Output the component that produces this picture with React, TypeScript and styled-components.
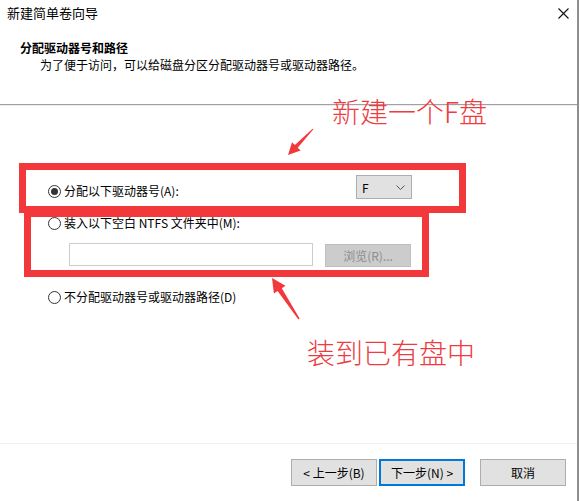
import React from "react";
import styled, { createGlobalStyle } from "styled-components";

const Global = createGlobalStyle`
  html, body { margin: 0; padding: 0; background: #fff; }
  body {
    font-family: "Noto Sans CJK SC", "Microsoft YaHei", sans-serif;
    font-size: 12px;
    color: #000;
  }
  * { box-sizing: border-box; }
`;

const Window = styled.div`
  position: relative;
  width: 579px;
  height: 501px;
  display: flex;
  flex-direction: column;
  background: #fff;
  border-right: 2px solid #8e8e8e;
  overflow: hidden;
`;

const TitleBar = styled.div`
  height: 26px;
  display: flex;
  align-items: center;
  justify-content: space-between;
  padding: 0 8px 0 7px;
`;

const TitleText = styled.span`
  font-size: 13px;
  line-height: 26px;
  color: #000;
`;

const CloseBtn = styled.span`
  display: flex;
  width: 11px;
  height: 11px;
`;

const Header = styled.div`
  height: 79px;
  padding: 13px 0 0 20px;
  border-bottom: 1px solid #a0a0a0;
  box-shadow: 0 1px 0 #ededed;
`;

const HeaderTitle = styled.div`
  font-weight: bold;
  font-size: 12px;
  line-height: 17px;
`;

const HeaderSub = styled.div`
  font-size: 12px;
  line-height: 17px;
  padding-left: 20px;
  color: #000;
`;

const Content = styled.div`
  flex: 1;
  padding: 70px 0 0 48px;
  display: flex;
  flex-direction: column;
`;

const DriveRow = styled.div`
  width: 364px;
  height: 26px;
  display: flex;
  justify-content: space-between;
  align-items: flex-start;
`;

const RadioRow = styled.label<{ $mt?: number }>`
  display: flex;
  align-items: center;
  height: 20px;
  gap: 3px;
  margin-top: ${(p) => p.$mt ?? 0}px;
  font-size: 12px;
  line-height: 20px;
`;

const RadioCircle = styled.span<{ $checked?: boolean }>`
  width: 13px;
  height: 13px;
  border-radius: 50%;
  border: 1px solid #333;
  background: #fff;
  display: flex;
  align-items: center;
  justify-content: center;
  flex: none;
  &::after {
    content: "";
    width: 7px;
    height: 7px;
    border-radius: 50%;
    background: ${(p) => (p.$checked ? "#333" : "transparent")};
  }
`;

const Select = styled.div`
  width: 56px;
  height: 24px;
  background: #e1e1e1;
  border: 1px solid #adadad;
  display: flex;
  align-items: center;
  justify-content: space-between;
  padding: 0 6px 0 5px;
  font-size: 12px;
`;

const PathRow = styled.div`
  display: flex;
  align-items: flex-start;
  gap: 12px;
  margin: 10px 0 0 21px;
`;

const PathInput = styled.div`
  width: 244px;
  height: 23px;
  background: #fff;
  border: 1px solid #cccccc;
`;

const BrowseBtn = styled.div`
  width: 86px;
  height: 23px;
  margin-top: 1px;
  background: #cccccc;
  border: 1px solid #bfbfbf;
  color: #8d8d8d;
  display: flex;
  align-items: center;
  justify-content: center;
  font-size: 12px;
`;

const Footer = styled.div`
  height: 58px;
  border-top: 1px solid #efefef;
  display: flex;
  justify-content: flex-end;
  align-items: flex-start;
  padding: 15px 11px 0 0;
`;

const Button = styled.div<{ $primary?: boolean; $ml?: number }>`
  width: 86px;
  height: 27px;
  margin-left: ${(p) => p.$ml ?? 0}px;
  background: #e1e1e1;
  border: 1px solid ${(p) => (p.$primary ? "#0078d7" : "#adadad")};
  box-shadow: ${(p) => (p.$primary ? "inset 0 0 0 1px #0078d7" : "none")};
  display: flex;
  align-items: center;
  justify-content: center;
  font-size: 12px;
  color: #000;
  white-space: pre;
`;

/* ---------- annotation overlay ---------- */

const RedBox = styled.div<{ $x: number; $y: number; $w: number; $h: number }>`
  position: absolute;
  left: ${(p) => p.$x}px;
  top: ${(p) => p.$y}px;
  width: ${(p) => p.$w}px;
  height: ${(p) => p.$h}px;
  border: 7px solid #f2383a;
  pointer-events: none;
`;

const RedNote = styled.div<{ $x: number; $y: number }>`
  position: absolute;
  left: ${(p) => p.$x}px;
  top: ${(p) => p.$y}px;
  font-family: "Noto Sans CJK SC", sans-serif;
  font-weight: 300;
  font-size: 28px;
  line-height: 30px;
  color: #ee3b3f;
  white-space: nowrap;
  pointer-events: none;
`;

const ArrowLayer = styled.svg`
  position: absolute;
  left: 0;
  top: 0;
  width: 580px;
  height: 501px;
  pointer-events: none;
`;

export default function App() {
  return (
    <>
      <Global />
      <Window>
        <TitleBar>
          <TitleText>新建简单卷向导</TitleText>
          <CloseBtn>
            <svg width="11" height="11" viewBox="0 0 11 11">
              <path d="M0.5 0.5 L10.5 10.5 M10.5 0.5 L0.5 10.5" stroke="#111" strokeWidth="1.1" />
            </svg>
          </CloseBtn>
        </TitleBar>
        <Header>
          <HeaderTitle>分配驱动器号和路径</HeaderTitle>
          <HeaderSub>为了便于访问，可以给磁盘分区分配驱动器号或驱动器路径。</HeaderSub>
        </Header>
        <Content>
          <DriveRow>
            <RadioRow $mt={6}>
              <RadioCircle $checked />
              分配以下驱动器号(A):
            </RadioRow>
            <Select>
              <span>F</span>
              <svg width="9" height="5" viewBox="0 0 9 5">
                <path d="M0.5 0.5 L4.5 4.5 L8.5 0.5" fill="none" stroke="#555" strokeWidth="1" />
              </svg>
            </Select>
          </DriveRow>
          <RadioRow $mt={12}>
            <RadioCircle />
            装入以下空白 NTFS 文件夹中(M):
          </RadioRow>
          <PathRow>
            <PathInput />
            <BrowseBtn>浏览(R)...</BrowseBtn>
          </PathRow>
          <RadioRow $mt={20}>
            <RadioCircle />
            不分配驱动器号或驱动器路径(D)
          </RadioRow>
        </Content>
        <Footer>
          <Button>{"< 上一步(B)"}</Button>
          <Button $primary $ml={2}>{"下一步(N) >"}</Button>
          <Button $ml={15}>取消</Button>
        </Footer>

        <RedBox $x={24} $y={210} $w={405} $h={67} />
        <RedBox $x={19} $y={163} $w={447} $h={50} />
        <RedNote $x={332} $y={96}>新建一个F盘</RedNote>
        <RedNote $x={307} $y={337}>装到已有盘中</RedNote>
        <ArrowLayer viewBox="0 0 580 501">
          <polygon
            fill="#f2383a"
            points="313.4,129.3 297.7,147.8 300.6,150.5 288,155 292,142.3 294.9,145.0 312.6,128.7"
          />
          <polygon
            fill="#f2383a"
            points="299.6,318.6 281.8,288.3 285.5,285.8 272,278 273.9,293.6 277.6,291.1 298.4,319.4"
          />
        </ArrowLayer>
      </Window>
    </>
  );
}
